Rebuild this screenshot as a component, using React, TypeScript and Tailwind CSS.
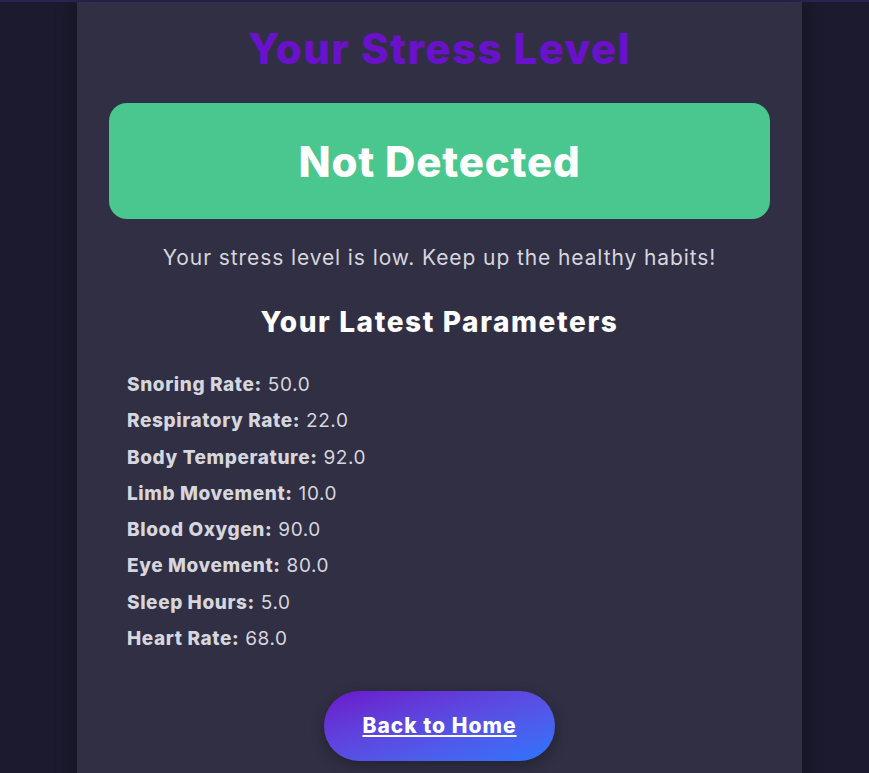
const params = [
  { label: 'Snoring Rate', value: '50.0' },
  { label: 'Respiratory Rate', value: '22.0' },
  { label: 'Body Temperature', value: '92.0' },
  { label: 'Limb Movement', value: '10.0' },
  { label: 'Blood Oxygen', value: '90.0' },
  { label: 'Eye Movement', value: '80.0' },
  { label: 'Sleep Hours', value: '5.0' },
  { label: 'Heart Rate', value: '68.0' },
];

export default function App() {
  return (
    <div className="min-h-screen w-full bg-[#1b1a2e] font-['Inter','DejaVu_Sans',sans-serif] border-t-2 border-[#2a2452] pl-[10px]">
      <main className="mx-auto w-[725px] min-h-[771px] bg-[#312f44] px-8 pt-[17px] pb-10 shadow-[0_0_20px_rgba(0,0,0,0.3)]">
        <h1 className="text-center text-[42px] leading-[60px] font-extrabold text-[#6a11cb] tracking-[1.4px]">
          Your Stress Level
        </h1>
        <section className="mt-[24px] h-[116px] rounded-[18px] bg-[#4ac78f] flex items-center justify-center">
          <span className="text-[42px] font-extrabold text-white tracking-[0.8px]">Not Detected</span>
        </section>
        <p className="mt-[24px] text-center text-[21px] leading-[30px] text-[#d6d6de] tracking-[0.9px]">
          Your stress level is low. Keep up the healthy habits!
        </p>
        <h2 className="mt-[31px] text-center text-[28px] leading-[36px] font-extrabold text-white tracking-[1.6px]">
          Your Latest Parameters
        </h2>
        <ul className="mt-[31px] pl-[18px] space-y-[9.3px]">
          {params.map((p) => (
            <li key={p.label} className="text-[19px] leading-[27px] text-[#d6d6de] tracking-[0.6px]">
              <span className="font-extrabold">{p.label}:</span> {p.value}
            </li>
          ))}
        </ul>
        <div className="mt-[39px] flex justify-center">
          <a
            href="#"
            className="w-[231px] h-[70px] rounded-full bg-gradient-to-br from-[#6a11cb] to-[#2575fc] flex items-center justify-center text-white text-[21px] font-extrabold tracking-[1px] underline underline-offset-2 shadow-[0_4px_14px_rgba(0,0,0,0.3)]"
          >
            Back to Home
          </a>
        </div>
      </main>
    </div>
  );
}
